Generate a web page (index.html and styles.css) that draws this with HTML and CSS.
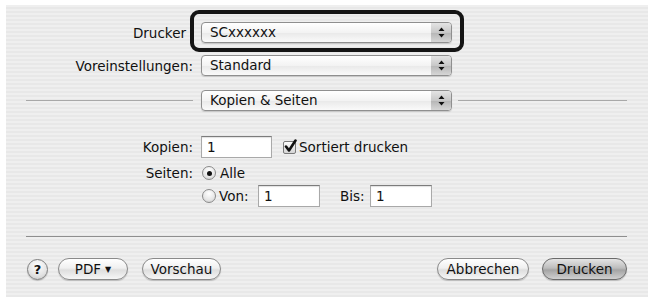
FILE: index.html
```html
<!DOCTYPE html>
<html lang="de">
<head>
  <meta charset="UTF-8" />
  <title>Drucken</title>
  <link rel="stylesheet" href="styles.css">
</head>
<body>
  <div class="dialog">
    <div class="row row-printer">
      <span class="label label-printer">Drucker</span>
      <div class="popup">
        <span class="popup-text">SCxxxxxx</span>
        <span class="popup-arrows"><svg width="7" height="11" viewBox="0 0 7 11"><path d="M3.5 0.5 L6.5 4 L0.5 4 Z M3.5 10.5 L6.5 7 L0.5 7 Z" fill="#111"/></svg></span>
        <span class="marker"></span>
      </div>
    </div>
    <div class="row row-preset">
      <span class="label">Voreinstellungen:</span>
      <div class="popup">
        <span class="popup-text">Standard</span>
        <span class="popup-arrows"><svg width="7" height="11" viewBox="0 0 7 11"><path d="M3.5 0.5 L6.5 4 L0.5 4 Z M3.5 10.5 L6.5 7 L0.5 7 Z" fill="#111"/></svg></span>
      </div>
    </div>
    <div class="row row-pane">
      <span class="label"><span class="rule rule-left"></span></span>
      <div class="popup">
        <span class="popup-text">Kopien &amp; Seiten</span>
        <span class="popup-arrows"><svg width="7" height="11" viewBox="0 0 7 11"><path d="M3.5 0.5 L6.5 4 L0.5 4 Z M3.5 10.5 L6.5 7 L0.5 7 Z" fill="#111"/></svg></span>
      </div>
      <span class="rule rule-right"></span>
    </div>
    <div class="row row-copies">
      <span class="label">Kopien:</span>
      <div class="field field-copies">1</div>
      <span class="checkbox"><svg width="15" height="15" viewBox="0 0 15 15"><path d="M3 7.5 L6 11.5 L12.5 1.5" fill="none" stroke="#111" stroke-width="2.6" stroke-linecap="round" stroke-linejoin="round"/></svg></span>
      <span class="check-text">Sortiert drucken</span>
    </div>
    <div class="row row-pages">
      <span class="label label-pages">Seiten:</span>
      <div class="page-options">
        <div class="option">
          <span class="radio radio-on"></span>
          <span>Alle</span>
        </div>
        <div class="option option-range">
          <span class="radio"></span>
          <span class="range-label">Von:</span>
          <div class="field field-range">1</div>
          <span class="range-label range-to">Bis:</span>
          <div class="field field-range">1</div>
        </div>
      </div>
    </div>
    <div class="separator"></div>
    <div class="footer">
      <span class="help">?</span>
      <span class="btn btn-pdf">PDF <span class="caret">&#9660;</span></span>
      <span class="btn btn-preview">Vorschau</span>
      <span class="spacer"></span>
      <span class="btn btn-cancel">Abbrechen</span>
      <span class="btn btn-default">Drucken</span>
    </div>
  </div>
</body>
</html>
```

FILE: styles.css
```css
body {
  margin: 0;
  background: #fff;
  font-family: "DejaVu Sans", Verdana, sans-serif;
  font-size: 13.5px;
  color: #111;
}
.dialog {
  margin: 5px 0 0 6px;
  height: 292px;
  box-sizing: border-box;
  padding: 17px 21px 0 0;
  background: repeating-linear-gradient(to bottom, #efefef 0, #efefef 2px, #e8e8e8 2px, #e8e8e8 4px);
}
.row {
  display: flex;
  align-items: center;
}
.label {
  width: 187px;
  flex-shrink: 0;
  text-align: right;
  margin-right: 8px;
  white-space: nowrap;
}
.label-printer {
  box-sizing: border-box;
  padding-right: 7px;
}
.row-preset {
  margin-top: 12px;
}
.row-pane {
  margin-top: 14px;
}
.row-pane .label {
  display: flex;
  align-items: center;
}
.rule {
  display: block;
  height: 1px;
  background: #a8a8a8;
}
.rule-left {
  margin-left: 20px;
  flex: 1;
}
.rule-right {
  flex: 1;
  margin-left: 6px;
}
.popup {
  position: relative;
  display: flex;
  width: 251px;
  height: 21px;
  box-sizing: border-box;
  border: 1px solid #8f8f8f;
  border-radius: 4px;
  background: linear-gradient(to bottom, #fff 0%, #f3f3f3 50%, #e9e9e9 52%, #fafafa 100%);
  box-shadow: 0 1px 1px rgba(0, 0, 0, 0.15);
}
.popup-text {
  flex: 1;
  padding-left: 8px;
  line-height: 19px;
}
.popup-arrows {
  width: 20px;
  display: flex;
  align-items: center;
  justify-content: center;
  border-radius: 0 3px 3px 0;
  background: linear-gradient(to bottom, #e4e4e4 0%, #c8c8c8 50%, #b6b6b6 52%, #d6d6d6 100%);
}
.marker {
  position: absolute;
  top: -13px;
  left: -12px;
  right: -13px;
  bottom: -10px;
  border: 4px solid #151515;
  border-radius: 9px;
  pointer-events: none;
}
.row-copies {
  margin-top: 25px;
}
.field {
  height: 22px;
  box-sizing: border-box;
  background: #fff;
  border: 1px solid #a9a9a9;
  border-top-color: #7c7c7c;
  box-shadow: inset 0 1px 1px rgba(0, 0, 0, 0.12);
  padding-left: 5px;
  line-height: 20px;
}
.field-copies {
  width: 71px;
}
.checkbox {
  position: relative;
  width: 13px;
  height: 13px;
  box-sizing: border-box;
  margin-left: 11px;
  border: 1px solid #7a7a7a;
  border-radius: 2px;
  background: linear-gradient(to bottom, #fdfdfd, #d5d5d5);
}
.checkbox svg {
  position: absolute;
  top: -3px;
  left: -1px;
}
.check-text {
  margin-left: 3px;
}
.row-pages {
  margin-top: 8px;
  align-items: flex-start;
}
.label-pages {
  line-height: 14px;
}
.page-options {
  display: flex;
  flex-direction: column;
  gap: 5px;
}
.option {
  display: flex;
  align-items: center;
  height: 14px;
  gap: 4px;
}
.option-range {
  height: 22px;
  gap: 0;
}
.radio {
  width: 14px;
  height: 14px;
  box-sizing: border-box;
  margin-left: 1px;
  border: 1px solid #8a8a8a;
  border-radius: 50%;
  background: radial-gradient(circle at 50% 30%, #fff 0%, #e6e6e6 60%, #c8c8c8 100%);
  display: flex;
  align-items: center;
  justify-content: center;
}
.radio-on::after {
  content: "";
  width: 5px;
  height: 5px;
  border-radius: 50%;
  background: #111;
}
.option-range .radio {
  margin-right: 3px;
}
.range-label {
  width: 39px;
}
.range-to {
  width: 30px;
  margin-left: 20px;
}
.field-range {
  width: 62px;
}
.separator {
  height: 1px;
  background: #8e8e8e;
  margin: 29px 0 0 20px;
}
.footer {
  display: flex;
  align-items: center;
  margin-top: 21px;
  padding-left: 21px;
}
.help {
  width: 21px;
  height: 21px;
  box-sizing: border-box;
  border: 1px solid #7f7f7f;
  border-radius: 50%;
  background: radial-gradient(circle at 50% 30%, #fff 0%, #e3e3e3 60%, #c4c4c4 100%);
  display: flex;
  align-items: center;
  justify-content: center;
  font-weight: bold;
  font-size: 13px;
  box-shadow: 0 1px 1px rgba(0, 0, 0, 0.2);
}
.btn {
  height: 22px;
  box-sizing: border-box;
  border: 1px solid #8a8a8a;
  border-radius: 11px;
  background: linear-gradient(to bottom, #ffffff 0%, #f0f0f0 45%, #dedede 55%, #f6f6f6 100%);
  box-shadow: 0 1px 1px rgba(0, 0, 0, 0.2);
  display: flex;
  align-items: center;
  justify-content: center;
  white-space: nowrap;
}
.btn-pdf {
  width: 70px;
  margin-left: 10px;
}
.caret {
  font-size: 8px;
  margin-left: 4px;
}
.btn-preview {
  width: 79px;
  margin-left: 14px;
}
.spacer {
  flex: 1;
}
.btn-cancel {
  width: 92px;
}
.btn-default {
  width: 85px;
  margin-left: 13px;
  border-color: #6a6a6a;
  background: linear-gradient(to bottom, #e4e4e4 0%, #bdbdbd 45%, #a4a4a4 55%, #d0d0d0 100%);
}
```
